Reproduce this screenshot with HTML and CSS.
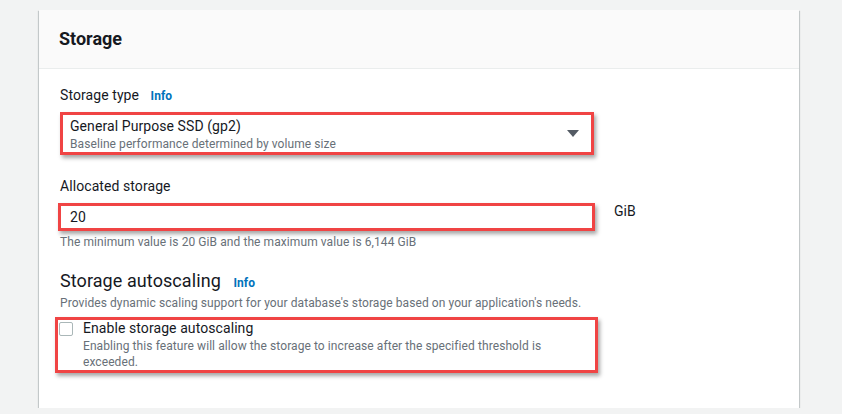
FILE: index.html
```html
<!DOCTYPE html>
<html>
<head>
<meta charset="UTF-8"/>
<title>Storage</title>
<link rel="stylesheet" href="styles.css">
</head>
<body>
<section class="card">
<header class="card-header">
<h2>Storage</h2>
</header>
<div class="card-body">
<div class="label">Storage type <a class="info">Info</a></div>
<div class="select marked">
<div class="select-text">
<div class="select-value">General Purpose SSD (gp2)</div>
<div class="select-desc">Baseline performance determined by volume size</div>
</div>
<svg class="caret" width="12" height="8" viewBox="0 0 12 8"><path d="M0 0h12L6 7z" fill="#545b64"/></svg>
</div>

<div class="label spaced">Allocated storage</div>
<div class="input-row">
<div class="input marked">20</div>
<span class="unit">GiB</span>
</div>
<p class="hint">The minimum value is 20 GiB and the maximum value is 6,144 GiB</p>

<h3 class="sub-title">Storage autoscaling <a class="info">Info</a></h3>
<p class="hint">Provides dynamic scaling support for your database's storage based on your application's needs.</p>
<div class="checkbox-field marked">
<span class="checkbox"></span>
<div>
<div class="checkbox-label">Enable storage autoscaling</div>
<div class="checkbox-desc">Enabling this feature will allow the storage to increase after the specified threshold is exceeded.</div>
</div>
</div>
</div>
</section>
</body>
</html>
```

FILE: styles.css
```css
body {
    margin: 0;
    padding: 10px 0 0 39px;
    background: #f2f3f3;
    font-family: Roboto, "Liberation Sans", sans-serif;
    color: #16191f;
}
.card {
    width: 760px;
    background: #fff;
    box-shadow: 0 1px 1px 0 rgba(0, 28, 36, 0.3), 1px 1px 1px 0 rgba(0, 28, 36, 0.15), -1px 1px 1px 0 rgba(0, 28, 36, 0.15);
}
.card-header {
    height: 58px;
    background: #fafafa;
    border-bottom: 1px solid #eaeded;
    padding: 0 20px;
}
.card-header h2 {
    margin: 0;
    font-size: 18px;
    font-weight: 700;
    line-height: 58px;
}
.card-body {
    padding: 15px 21px 35px;
    letter-spacing: 0.08px;
}
.label {
    font-size: 14px;
    line-height: 22px;
}
.label.spaced {
    margin-top: 20px;
}
.info {
    margin-left: 8px;
    font-size: 12px;
    font-weight: 700;
    color: #0073bb;
}
.marked {
    border: 3px solid #f04444;
    box-shadow: 2px 3px 4px rgba(0, 0, 0, 0.35);
}
.select {
    margin-top: 5px;
    width: 528px;
    height: 37px;
    display: flex;
    align-items: center;
    justify-content: space-between;
}
.select-text {
    padding: 1px 0 0 7px;
    align-self: flex-start;
}
.select-value {
    font-size: 14px;
    line-height: 20px;
}
.select-desc {
    font-size: 12px;
    line-height: 16px;
    color: #687078;
}
.caret {
    margin-right: 12px;
}
.input-row {
    display: flex;
    margin-top: 6px;
    margin-left: -2px;
}
.input {
    width: 522px;
    height: 22px;
    padding-left: 9px;
    font-size: 14px;
    line-height: 22px;
}
.unit {
    margin-left: 19px;
    font-size: 14px;
    line-height: 16px;
}
.hint {
    margin: 3px 0 0;
    font-size: 12px;
    line-height: 16px;
    color: #687078;
}
.sub-title {
    margin: 19px 0 0;
    font-size: 18px;
    font-weight: 400;
    line-height: 24px;
}
.sub-title + .hint {
    margin-top: 0;
}
.checkbox-field {
    margin: 6px 0 0 -5px;
    width: 537px;
    display: flex;
}
.checkbox {
    flex: none;
    width: 12px;
    height: 12px;
    margin: 2px 10px 0 1px;
    border: 1px solid #aab7b8;
    border-radius: 2px;
}
.checkbox-label {
    font-size: 14px;
    line-height: 16px;
}
.checkbox-desc {
    margin-top: 2px;
    font-size: 12px;
    line-height: 16px;
    color: #687078;
    width: 500px;
}
```
